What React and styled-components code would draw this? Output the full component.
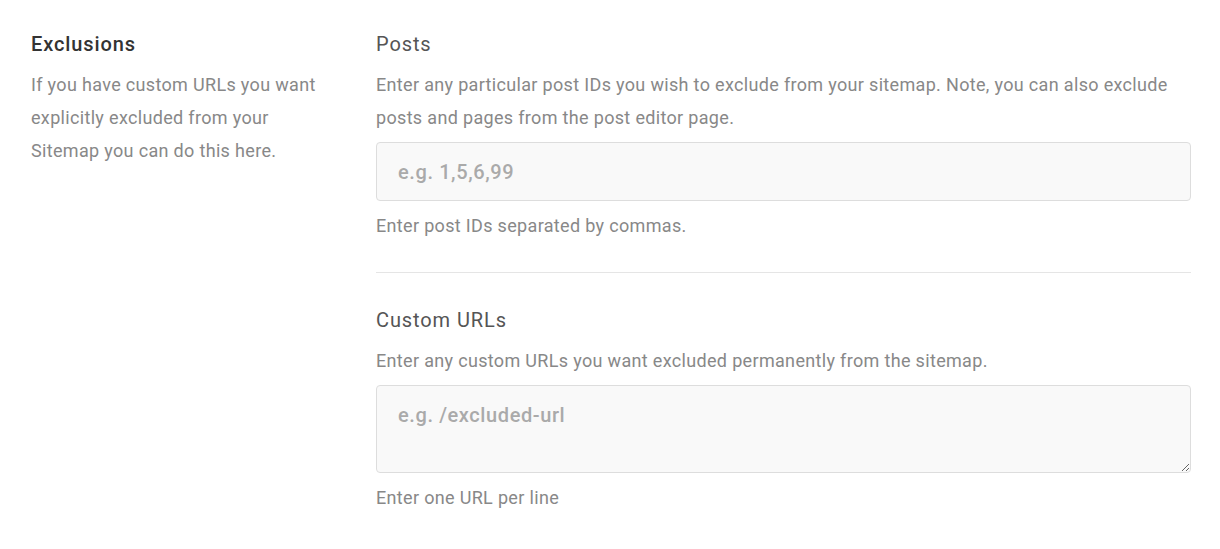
import styled, { createGlobalStyle } from "styled-components";

const GlobalStyle = createGlobalStyle`
  body {
    margin: 0;
    background: #fff;
    font-family: Roboto, "Liberation Sans", sans-serif;
  }
`;

const Section = styled.div`
  display: grid;
  grid-template-columns: 345px 1fr;
  padding: 30px 29px 0 31px;
`;

const Intro = styled.div`
  padding-right: 45px;
`;

const Title = styled.h2`
  margin: 0;
  font-size: 20px;
  line-height: 28px;
  font-weight: ${props => props.$muted ? 400 : 500};
  letter-spacing: ${props => props.$muted ? 0.9 : 0.9}px;
  color: ${props => props.$muted ? "#555" : "#333"};
`;

const Text = styled.p`
  margin: ${props => props.$top || 0}px 0 0;
  font-size: 18px;
  line-height: 33px;
  letter-spacing: 0.33px;
  color: #888;
`;

const Fields = styled.div`
  display: flex;
  flex-direction: column;
`;

const Field = styled.div`
  display: flex;
  flex-direction: column;
`;

const Divider = styled.hr`
  border: 0;
  border-top: 1px solid #e5e5e5;
  margin: 30px 0 33px;
`;

const fieldStyle = `
  box-sizing: border-box;
  margin-top: 8px;
  width: 100%;
  border: 1px solid #ddd;
  border-radius: 4px;
  background: #f9f9f9;
  font-family: Roboto, "Liberation Sans", sans-serif;
  font-size: 20px;
  font-weight: 500;
  letter-spacing: 0.6px;
  color: #555;
  outline: none;
  &::placeholder { color: #aaa; }
`;

const Input = styled.input`
  ${fieldStyle}
  height: 59px;
  padding: 0 21px;
`;

const TextArea = styled.textarea`
  ${fieldStyle}
  display: block;
  height: 88px;
  padding: 15px 21px;
  line-height: 28px;
`;

export default function App() {
  return (
    <>
      <GlobalStyle />
      <Section>
        <Intro>
          <Title>Exclusions</Title>
          <Text $top={10}>
            If you have custom URLs you want explicitly excluded from your Sitemap you can do this here.
          </Text>
        </Intro>
        <Fields>
          <Field>
            <Title $muted>Posts</Title>
            <Text $top={10}>
              Enter any particular post IDs you wish to exclude from your sitemap. Note, you can also exclude posts and pages from the post editor page.
            </Text>
            <Input placeholder="e.g. 1,5,6,99" />
            <Text $top={8}>Enter post IDs separated by commas.</Text>
          </Field>
          <Divider />
          <Field>
            <Title $muted>Custom URLs</Title>
            <Text $top={10}>
              Enter any custom URLs you want excluded permanently from the sitemap.
            </Text>
            <TextArea placeholder="e.g. /excluded-url" />
            <Text $top={8}>Enter one URL per line</Text>
          </Field>
        </Fields>
      </Section>
    </>
  );
}
